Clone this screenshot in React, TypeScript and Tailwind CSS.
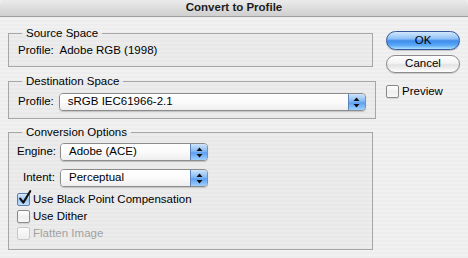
import React from "react";

function Arrows() {
  return (
    <svg width="7" height="11" viewBox="0 0 7 11">
      <path d="M3.5 0.5 L6.5 4 L0.5 4 Z" fill="#111" />
      <path d="M0.5 7 L6.5 7 L3.5 10.5 Z" fill="#111" />
    </svg>
  );
}

function Popup({ text, w }: { text: string; w: string }) {
  return (
    <div
      className={`${w} h-[18px] flex rounded-[4px] border border-[#8c8c8c] shadow-[0_1px_1px_rgba(0,0,0,0.18)] overflow-hidden`}
    >
      <div className="flex-1 flex items-center pl-[8px] bg-gradient-to-b from-[#ffffff] via-[#fbfbfb] to-[#eeeeee] leading-none">
        {text}
      </div>
      <div className="w-[17px] flex items-center justify-center border-l border-[#5d84b8] bg-[linear-gradient(to_bottom,#cfe4fb_0%,#86baf3_45%,#5d9ff0_55%,#9fd0ff_100%)]">
        <Arrows />
      </div>
    </div>
  );
}

function Check({
  checked,
  disabled,
}: {
  checked?: boolean;
  disabled?: boolean;
}) {
  return (
    <div className="relative w-[13px] h-[13px]">
      <div
        className={
          checked
            ? "w-[13px] h-[13px] rounded-[2px] border border-[#5b7fb0] bg-[linear-gradient(to_bottom,#d8e9fb,#9cc7f5_55%,#c4e0ff)]"
            : disabled
            ? "w-[13px] h-[13px] rounded-[2px] border border-[#c8c8c8] bg-gradient-to-b from-[#fbfbfb] to-[#eeeeee]"
            : "w-[13px] h-[13px] rounded-[2px] border border-[#8a8a8a] bg-[linear-gradient(to_bottom,#ffffff,#eeeeee_55%,#f8f8f8)] shadow-[0_1px_1px_rgba(0,0,0,0.12)]"
        }
      />
      {checked && (
        <svg
          className="absolute left-[1px] top-[-3px]"
          width="14"
          height="15"
          viewBox="0 0 14 15"
        >
          <path
            d="M2.2 8.6 L5.3 12.6 L12.2 1.2"
            fill="none"
            stroke="#111"
            strokeWidth="2.1"
            strokeLinejoin="round"
            strokeLinecap="round"
          />
        </svg>
      )}
    </div>
  );
}

export default function App() {
  return (
    <div className="w-[468px] h-[258px] overflow-hidden text-[11.5px] text-black font-['Lucida_Grande','Liberation_Sans',Arial,sans-serif] bg-[repeating-linear-gradient(to_bottom,#ededed_0px,#ededed_2px,#f1f1f1_2px,#f1f1f1_4px)]">
      <div className="h-[17px] flex items-center justify-center font-bold text-[11.5px] text-[#1c1c1c] border-b border-[#9d9d9d] bg-gradient-to-b from-[#ebebeb] to-[#cfcfcf] leading-none rounded-t-[5px]">
        Convert to Profile
      </div>
      <div className="flex pl-[8px] pt-[9px]">
        <div className="w-[365px] flex flex-col">
          <fieldset className="m-0 border border-[#a6a6a6] px-[9px] pb-[9px] pt-[3px] bg-black/[0.02]">
            <legend className="ml-[4px] px-[4px] leading-[14px]">
              Source Space
            </legend>
            <div className="leading-[14px]">Profile:&nbsp; Adobe RGB (1998)</div>
          </fieldset>
          <fieldset className="mt-[7px] m-0 border border-[#a6a6a6] px-[9px] pb-[7px] pt-[5px] bg-black/[0.02]">
            <legend className="ml-[4px] px-[4px] leading-[14px]">
              Destination Space
            </legend>
            <div className="flex items-center gap-[5px]">
              <span className="leading-none">Profile:</span>
              <Popup text="sRGB IEC61966-2.1" w="w-[307px]" />
            </div>
          </fieldset>
          <fieldset className="mt-[6px] m-0 border border-[#a6a6a6] px-[8px] pb-[7px] pt-[4px] bg-black/[0.02]">
            <legend className="ml-[5px] px-[4px] leading-[14px]">
              Conversion Options
            </legend>
            <div className="flex flex-col gap-[8px]">
              <div className="flex items-center">
                <span className="w-[38px] text-right leading-none">Engine:</span>
                <div className="ml-[5px]">
                  <Popup text="Adobe (ACE)" w="w-[148px]" />
                </div>
              </div>
              <div className="flex items-center">
                <span className="w-[38px] text-right leading-none">Intent:</span>
                <div className="ml-[5px]">
                  <Popup text="Perceptual" w="w-[148px]" />
                </div>
              </div>
            </div>
            <div className="mt-[4px] flex flex-col">
              <div className="h-[17px] flex items-center gap-[3px]">
                <Check checked />
                <span className="leading-none">Use Black Point Compensation</span>
              </div>
              <div className="h-[17px] flex items-center gap-[3px]">
                <Check />
                <span className="leading-none">Use Dither</span>
              </div>
              <div className="h-[17px] flex items-center gap-[3px]">
                <Check disabled />
                <span className="leading-none text-[#a2a2a2]">Flatten Image</span>
              </div>
            </div>
          </fieldset>
        </div>
        <div className="ml-[13px] mt-[5px] flex flex-col">
          <div className="w-[74px] h-[19px] rounded-full border border-[#34589a] flex items-center justify-center leading-none shadow-[0_1px_1px_rgba(0,0,0,0.2)] bg-[linear-gradient(to_bottom,#d3e7fc_0%,#8fc1f6_40%,#3d8ceb_52%,#58a7f7_78%,#aee0ff_100%)]">
            OK
          </div>
          <div className="mt-[5px] w-[74px] h-[18px] rounded-full border border-[#8c8c8c] flex items-center justify-center leading-none shadow-[0_1px_1px_rgba(0,0,0,0.15)] bg-[linear-gradient(to_bottom,#ffffff_0%,#f3f3f3_45%,#e2e2e2_55%,#f4f4f4_85%,#ffffff_100%)]">
            Cancel
          </div>
          <div className="mt-[12px] flex items-center gap-[3px]">
            <Check />
            <span className="leading-none">Preview</span>
          </div>
        </div>
      </div>
    </div>
  );
}
